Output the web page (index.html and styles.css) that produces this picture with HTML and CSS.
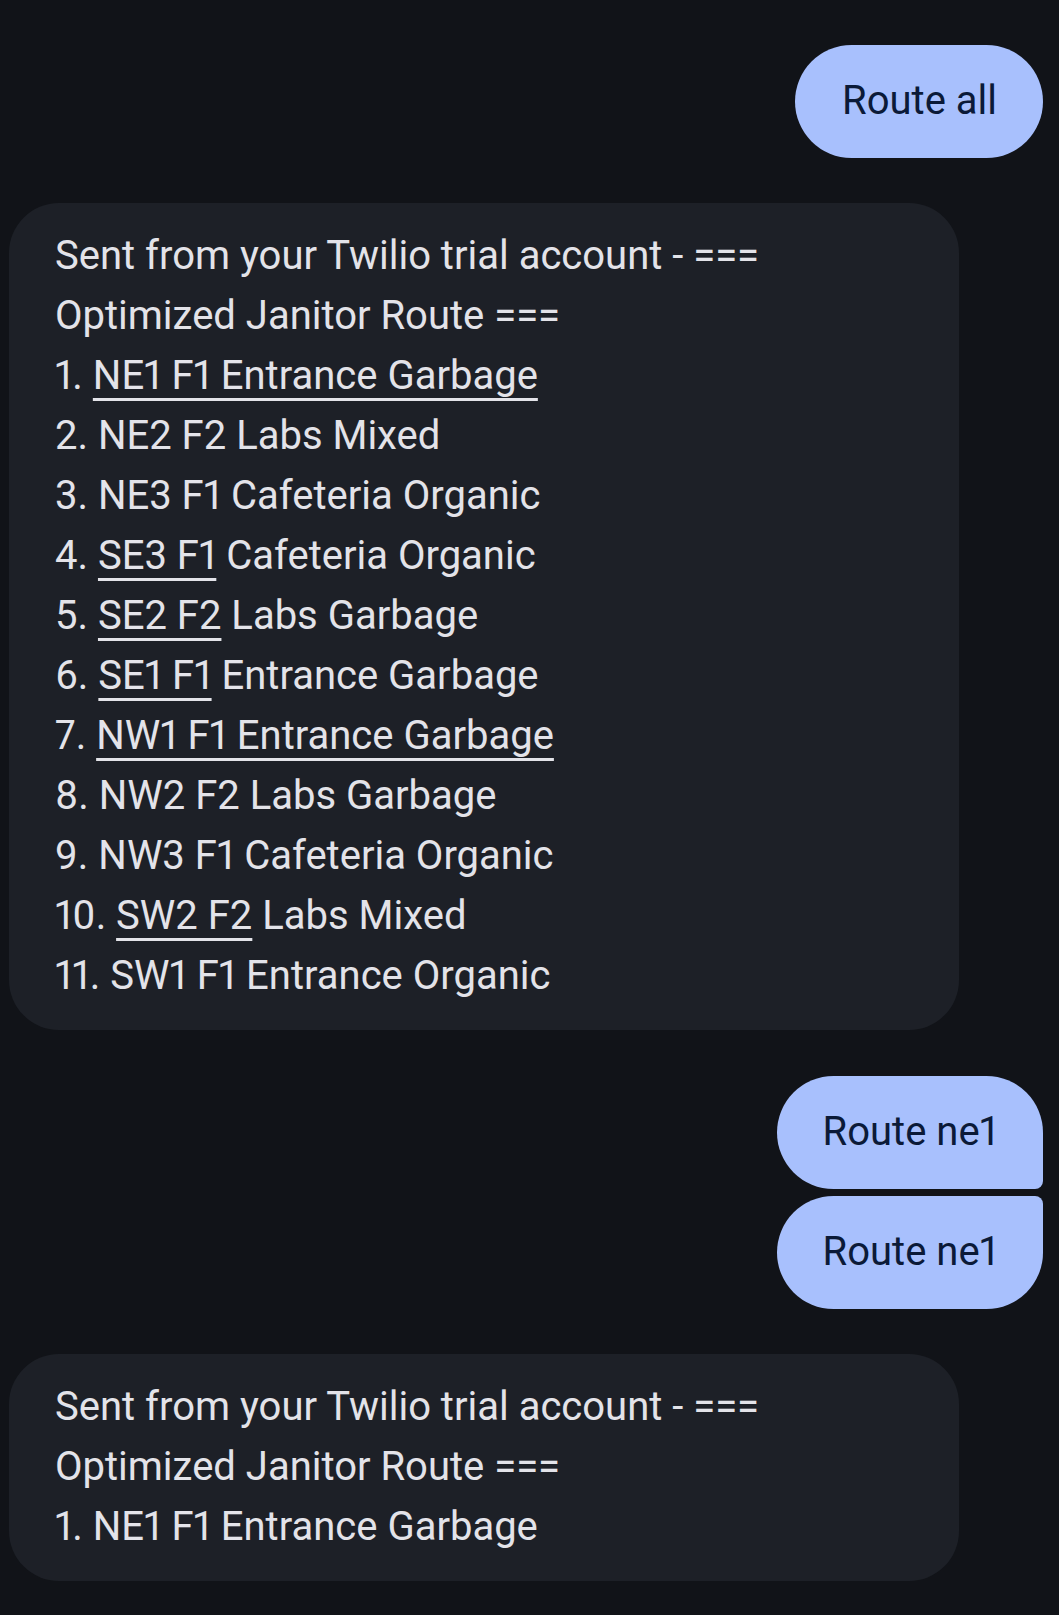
FILE: index.html
```html
<!DOCTYPE html>
<html lang="en">
<head>
<meta charset="utf-8">
<title>Messages</title>
<link rel="stylesheet" href="styles.css">
</head>
<body>
<main class="thread">
  <div class="row out first">
    <div class="bubble sent">Route all</div>
  </div>
  <div class="row in">
    <div class="bubble recv">
      <div class="line">Sent from your Twilio trial account - === Optimized Janitor Route ===</div>
      <div class="line">1. <span class="link">NE1 F1 Entrance Garbage</span></div>
      <div class="line">2. NE2 F2 Labs Mixed</div>
      <div class="line">3. NE3 F1 Cafeteria Organic</div>
      <div class="line">4. <span class="link">SE3 F1</span> Cafeteria Organic</div>
      <div class="line">5. <span class="link">SE2 F2</span> Labs Garbage</div>
      <div class="line">6. <span class="link">SE1 F1</span> Entrance Garbage</div>
      <div class="line">7. <span class="link">NW1 F1 Entrance Garbage</span></div>
      <div class="line">8. NW2 F2 Labs Garbage</div>
      <div class="line">9. NW3 F1 Cafeteria Organic</div>
      <div class="line">10. <span class="link">SW2 F2</span> Labs Mixed</div>
      <div class="line">11. SW1 F1 Entrance Organic</div>
    </div>
  </div>
  <div class="row out group">
    <div class="bubble sent top">Route ne1</div>
    <div class="bubble sent bottom">Route ne1</div>
  </div>
  <div class="row in">
    <div class="bubble recv">
      <div class="line">Sent from your Twilio trial account - === Optimized Janitor Route ===</div>
      <div class="line">1. NE1 F1 Entrance Garbage</div>
    </div>
  </div>
</main>
</body>
</html>
```

FILE: styles.css
```css
html, body {
  margin: 0;
  padding: 0;
  background: #111318;
}

body {
  font-family: Roboto, "Noto Sans", sans-serif;
  font-size: 40px;
  line-height: 60px;
  font-variant-numeric: proportional-nums;
  -webkit-font-smoothing: antialiased;
}

.thread {
  display: flex;
  flex-direction: column;
  gap: 45px;
  padding: 45px 16px 36px 9px;
  min-height: 1615px;
  box-sizing: border-box;
}

.row {
  display: flex;
  flex-direction: column;
}

.row.out {
  align-items: flex-end;
}

.row.in {
  align-items: flex-start;
}

.row.group {
  gap: 7px;
  margin-top: 1px;
}

.bubble {
  box-sizing: border-box;
}

.sent {
  background: #a8c0fd;
  color: #0b1a38;
  padding: 26px 46px 27px 47px;
  border-radius: 57px;
  white-space: nowrap;
}

.sent.top {
  border-bottom-right-radius: 8px;
  padding-left: 46px;
}

.sent.bottom {
  border-top-right-radius: 8px;
  padding-left: 46px;
}

.recv {
  background: #1d2027;
  color: #e3e3e9;
  max-width: 950px;
  width: 950px;
  padding: 23px 40px 24px 46px;
  border-radius: 50px;
}

.link {
  text-decoration: underline;
  text-decoration-thickness: 2.5px;
  text-underline-offset: 9px;
}
```
